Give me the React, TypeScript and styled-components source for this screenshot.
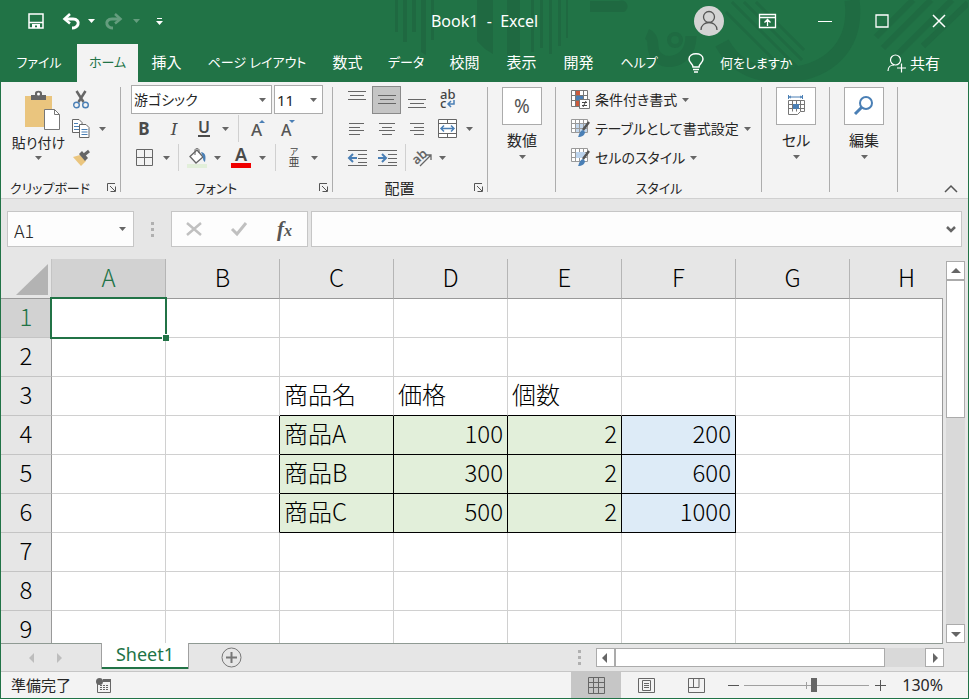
import React from "react";
import styled, { createGlobalStyle, css } from "styled-components";

const GREEN = "#217346";
const UI_FONT = `"Noto Sans", "Noto Sans CJK JP", sans-serif`;
const CELL_FONT = `"Noto Sans CJK JP", sans-serif`;

const Global = createGlobalStyle`
  *, *::before, *::after { box-sizing: border-box; }
  body { margin: 0; font-family: ${UI_FONT}; font-feature-settings: "palt"; font-size: 15px; line-height: 20px; color: #262626; }
  button, input, select { font: inherit; font-feature-settings: inherit; color: inherit; margin: 0; padding: 0; border: 0; border-radius: 0; background: none; outline: none; }
  svg { display: block; flex: none; overflow: visible; }
`;

const Window = styled.div`
  display: flex;
  flex-direction: column;
  height: 100vh;
  overflow: hidden;
  border: solid ${GREEN};
  border-width: 0 1px 1px;
  background: #e6e6e6;
`;

/* ---------- title and tabs ---------- */
const Header = styled.header`
  position: relative;
  background: ${GREEN};
  color: #fff;
  flex: none;
`;
const Pattern = styled.svg`
  position: absolute;
  right: 0;
  top: 0;
  overflow: hidden;
`;
const TitleBar = styled.div`
  position: relative;
  display: grid;
  grid-template-columns: 1fr auto 1fr;
  align-items: center;
  height: 44px;
  padding-bottom: 3px;
`;
const QuickAccess = styled.div`
  display: flex;
  align-items: center;
  padding-left: 17px;
`;
const WindowButtons = styled.div`
  display: flex;
  justify-content: flex-end;
  align-items: center;
  padding-right: 1px;
`;
const Title = styled.h1`
  margin: 0;
  font-size: 16px;
  font-weight: 400;
  white-space: pre;
`;
const IconButton = styled.button<{ $w: number; $on?: boolean; $dim?: boolean }>`
  display: flex;
  align-items: center;
  justify-content: center;
  flex: none;
  width: ${(p) => p.$w}px;
  height: 28px;
  opacity: ${(p) => (p.$dim ? 0.3 : 1)};
  ${(p) =>
    p.$on &&
    css`
      background: #c5c5c5;
      border: 1px solid #8a8a8a;
    `}
`;
const Tabs = styled.nav`
  position: relative;
  display: flex;
  height: 38px;
`;
const Tab = styled.button<{ $w: number; $active?: boolean; $kana?: boolean }>`
  width: ${(p) => p.$w}px;
  flex: none;
  padding-bottom: 2px;
  white-space: nowrap;
  font-size: ${(p) => (p.$kana ? 13 : 15)}px;
  color: ${(p) => (p.$active ? GREEN : "#fff")};
  background: ${(p) => (p.$active ? "#f3f3f3" : "transparent")};
`;
const TellMe = styled.button`
  display: flex;
  align-items: center;
  gap: 16px;
  padding-left: 17px;
  font-size: 13px;
`;
const Share = styled.button`
  display: flex;
  align-items: center;
  gap: 4px;
  margin-left: auto;
  padding-right: 28px;
`;

/* ---------- ribbon ---------- */
const Ribbon = styled.div`
  display: flex;
  position: relative;
  flex: none;
  height: 117px;
  background: #f3f3f3;
  border-bottom: 1px solid #d0d0d0;
`;
const Group = styled.section<{ $w: number }>`
  position: relative;
  display: flex;
  flex-direction: column;
  flex: none;
  width: ${(p) => p.$w}px;
  padding-top: 3px;
  &::after {
    content: "";
    position: absolute;
    right: 0;
    top: 5px;
    bottom: 6px;
    width: 1px;
    background: #adadad;
  }
`;
const GroupFooter = styled.div<{ $launcher?: boolean; $kana?: boolean }>`
  display: flex;
  align-items: center;
  justify-content: center;
  position: relative;
  margin-top: auto;
  height: 21px;
  padding-right: ${(p) => (p.$launcher ? 22 : 0)}px;
  font-size: ${(p) => (p.$kana ? 13 : 15)}px;
  white-space: nowrap;
`;
const Launcher = styled.button`
  position: absolute;
  right: 5px;
  top: 6px;
`;
const Rows = styled.div<{ $pad: number }>`
  display: grid;
  grid-auto-rows: 29px;
  padding-left: ${(p) => p.$pad}px;
`;
const Row = styled.div<{ $gap?: number }>`
  display: flex;
  align-items: center;
  gap: ${(p) => p.$gap || 0}px;
`;
const Divider = styled.span<{ $w: number }>`
  display: flex;
  justify-content: center;
  width: ${(p) => p.$w}px;
  &::before {
    content: "";
    width: 1px;
    height: 27px;
    background: #d0d0d0;
  }
`;
const Combo = styled.label<{ $w: number }>`
  display: flex;
  position: relative;
  align-items: center;
  width: ${(p) => p.$w}px;
  height: 29px;
  border: 1px solid #ababab;
  background: #fff;
  select {
    appearance: none;
    width: 100%;
    padding-left: 2px;
    font-size: ${(p) => (p.$w > 100 ? 14 : 15)}px;
  }
  svg {
    position: absolute;
    right: 5px;
    pointer-events: none;
  }
`;
const Letter = styled.span<{ $kind: "b" | "i" | "u" }>`
  font-size: 17px;
  line-height: 20px;
  font-weight: 700;
  color: #4a4a4a;
  ${(p) => p.$kind === "i" && `font-style: italic; font-family: "DejaVu Serif", "Liberation Serif", serif; font-weight: 400; font-size: 17px;`}
  ${(p) => p.$kind === "u" && `font-weight: 600; border-bottom: 2px solid #4a4a4a; line-height: 15px; font-size: 16px;`}
`;
const ClipboardBody = styled.div`
  display: flex;
  padding-left: 7px;
`;
const PasteButton = styled.button`
  display: flex;
  flex-direction: column;
  align-items: center;
  width: 61px;
  padding-top: 6px;
  gap: 3px;
  font-size: 14px;
  white-space: nowrap;
  svg:first-child {
    margin-left: 7px;
  }
`;
const BigButton = styled.button`
  display: flex;
  flex-direction: column;
  align-items: center;
  align-self: center;
  margin-top: 2px;
  gap: 5px;
`;
const BigBox = styled.span`
  display: flex;
  align-items: center;
  justify-content: center;
  width: 40px;
  height: 38px;
  font-size: 19px;
  color: #555;
  border: 1px solid #ababab;
  background: #fff;
`;
const BigLabel = styled.span`
  line-height: 20px;
`;
const StyleButton = styled.button`
  display: flex;
  align-items: center;
  gap: 5px;
  font-size: 14px;
  white-space: nowrap;
`;
const Collapse = styled.button`
  margin: auto 10px 5px auto;
`;

/* ---------- formula bar ---------- */
const FormulaBar = styled.div`
  display: flex;
  flex: none;
  padding: 12px 6px;
  height: 60px;
`;
const Field = styled.div<{ $w?: number }>`
  display: flex;
  align-items: center;
  ${(p) => (p.$w ? `flex: none; width: ${p.$w}px;` : "flex: 1; min-width: 0;")}
  background: #fdfdfd;
  border: 1px solid #c6c6c6;
  input {
    flex: 1;
    min-width: 0;
    height: 100%;
    padding: 2px 0 0 6px;
    font-size: 18px;
    font-weight: 300;
    font-family: ${CELL_FONT};
    font-feature-settings: normal;
  }
`;
const Grip = styled.div<{ $w: number }>`
  display: flex;
  flex-direction: column;
  align-items: center;
  justify-content: center;
  flex: none;
  gap: 3px;
  width: ${(p) => p.$w}px;
  i {
    width: 3px;
    height: 3px;
    background: #b0b0b0;
  }
`;
const Fx = styled.span`
  font: italic 700 21px "Liberation Serif", serif;
  color: #555;
  small {
    font-size: 16px;
  }
`;

/* ---------- sheet ---------- */
const Workspace = styled.main`
  display: flex;
  flex: 1;
  min-height: 0;
`;
const GridPane = styled.div`
  position: relative;
  flex: 1;
  min-width: 0;
  overflow: hidden;
  &::after {
    content: "";
    position: absolute;
    right: 0;
    top: 39px;
    bottom: 0;
    width: 1px;
    background: #999;
  }
`;
const Sheet = styled.table`
  table-layout: fixed;
  width: 963px;
  border-collapse: separate;
  border-spacing: 0;
  font-family: ${CELL_FONT};
  font-feature-settings: normal;
  font-size: 24px;
  font-weight: 300;
  line-height: 34px;
  color: #000;
  th,
  td {
    vertical-align: top;
  }
`;
const Corner = styled.td`
  width: 51px;
  height: 40px;
  padding: 5px 0 0 15px;
  border-right: 1px solid #c4c4c4;
  border-bottom: 1px solid #999;
`;
const ColHead = styled.th<{ $on: boolean }>`
  height: 40px;
  padding: 0;
  font-weight: 300;
  line-height: 36px;
  border-bottom: 1px solid #999;
  border-right: 1px solid #b5b5b5;
  color: ${(p) => (p.$on ? GREEN : "#000")};
  background: ${(p) => (p.$on ? "#d2d2d2" : "#e6e6e6")};
`;
const RowHead = styled.th<{ $on: boolean }>`
  height: 39px;
  padding: 0;
  font-weight: 300;
  border-right: 1px solid #999;
  border-bottom: 1px solid #c4c4c4;
  color: ${(p) => (p.$on ? GREEN : "#000")};
  background: ${(p) => (p.$on ? "#d2d2d2" : "#e6e6e6")};
`;
const Cell = styled.td<{ $fill: string; $right: boolean; $bottom: boolean; $num: boolean }>`
  position: relative;
  height: 39px;
  padding: 0 4px;
  white-space: nowrap;
  text-align: ${(p) => (p.$num ? "right" : "left")};
  background: ${(p) => p.$fill};
  border-right: 1px solid ${(p) => (p.$right ? "#000" : "#d0d0d0")};
  border-bottom: 1px solid ${(p) => (p.$bottom ? "#000" : "#d0d0d0")};
`;
const Selection = styled.div`
  position: absolute;
  inset: -2px;
  border: 2px solid ${GREEN};
  z-index: 1;
  &::after {
    content: "";
    position: absolute;
    right: -4px;
    bottom: -4px;
    width: 6px;
    height: 6px;
    background: ${GREEN};
    box-shadow: -1px -1px 0 #fff;
  }
`;
const ScrollBar = styled.div<{ $vertical?: boolean }>`
  display: flex;
  flex: none;
  background: #d9d9d9;
  ${(p) =>
    p.$vertical
      ? "flex-direction: column; width: 19px; margin: 2px 3px 0;"
      : "width: 36%; height: 19px; margin-right: 24px;"}
`;
const ScrollButton = styled.button`
  display: flex;
  align-items: center;
  justify-content: center;
  flex: none;
  width: 19px;
  height: 19px;
  border: 1px solid #ababab;
  background: #fff;
`;
const ScrollTrack = styled.div<{ $vertical?: boolean }>`
  flex: 1;
  &::before {
    content: "";
    display: block;
    border: 1px solid #ababab;
    background: #fff;
    ${(p) => (p.$vertical ? "height: 40%; width: 100%;" : "width: 87%; height: 100%;")}
  }
`;
const SheetBar = styled.div`
  display: flex;
  align-items: center;
  flex: none;
  height: 27px;
`;
const Rule = styled.div`
  flex: none;
  height: 1px;
  margin-right: 25px;
  background: #8f9a93;
`;
const SheetNav = styled.div`
  display: flex;
  gap: 17px;
  width: 100px;
  padding-left: 26px;
`;
const SheetTab = styled.button`
  align-self: flex-start;
  width: 88px;
  height: 26px;
  margin-top: -1px;
  padding-bottom: 4px;
  background: #fff;
  color: ${GREEN};
  font-size: 18px;
  line-height: 20px;
  border: solid #a0a0a0;
  border-width: 0 1px;
  box-shadow: inset 0 -2px 0 ${GREEN};
`;
const AddSheet = styled.button`
  margin-left: 32px;
  margin-right: auto;
`;
const StatusBar = styled.footer`
  display: flex;
  align-items: center;
  flex: none;
  height: 27px;
  padding: 0 25px 0 10px;
  border-top: 1px solid #c6c6c6;
  background: #f3f3f3;
`;
const StatusText = styled.span`
  margin-right: 25px;
`;
const ViewButton = styled.button<{ $on?: boolean }>`
  display: flex;
  align-items: center;
  justify-content: center;
  width: 50px;
  height: 26px;
  background: ${(p) => (p.$on ? "#c6c6c6" : "transparent")};
`;
const Views = styled.div`
  display: flex;
  margin-left: auto;
  margin-right: 6px;
`;
const Zoom = styled.input`
  appearance: none;
  width: 125px;
  height: 14px;
  margin: 0 6px 0 5px;
  background:
    linear-gradient(#a0a0a0, #a0a0a0) center / 100% 1px no-repeat,
    linear-gradient(#a0a0a0, #a0a0a0) center / 1px 7px no-repeat;
  &::-webkit-slider-thumb {
    appearance: none;
    width: 6px;
    height: 14px;
    background: #666;
  }
`;
const ZoomText = styled.output`
  width: 58px;
  font-size: 16px;
  text-align: right;
`;

/* ---------- icons ---------- */
const Caret = ({ color = "#666" }: { color?: string }) => (
  <svg width="7" height="4" viewBox="0 0 7 4"><path d="M0 0h7L3.5 4z" fill={color} /></svg>
);
const Arrow = ({ dir, color = "#666" }: { dir: "up" | "down" | "left" | "right"; color?: string }) => {
  const d = { up: "M0 7 5 2l5 5z", down: "M0 3h10L5 8z", left: "M7 0v10L2 5z", right: "M3 0v10l5-5z" }[dir];
  return <svg width="10" height="10"><path d={d} fill={color} /></svg>;
};
const LauncherIcon = () => (
  <svg width="9" height="9" fill="none" stroke="#555"><path d="M.5 8V.5H8M3 3l5 5M8.500 3.500v5h-5" /></svg>
);
const Lines = ({ rows, w = 20, h = 20 }: { rows: number[][]; w?: number; h?: number }) => (
  <svg width={w} height={h} stroke="#666">
    {rows.map(([x1, x2, y]) => <path key={y} d={`M${x1} ${y + 0.5}H${x2}`} />)}
  </svg>
);

const HeaderPattern = () => (
  <Pattern width="600" height="82" viewBox="369 0 600 82" fill="none" stroke="#1f6b42">
    <g fill="#1f6941" stroke="none">
      <path d="M396 0h3v32h-3zM404 0h4v42h-4zM413 0h4v32h-4zM422 0h5v55l-5-3zM432 0h3v40h-3z" />
      <path d="M478 0h16v54l-8-5-8-8zM508 0h13v55h-13zM532 0h3v52h-3zM541 0h3v48h-3zM550 0h3v54h-3zM559 0h3v46h-3zM567 0h2v38h-2z" />
      <path d="M591 1h29a6 6 0 0 1 5 11h-34z" />
    </g>
    <path d="M648 34c5 2 6 6 6 12 0 22 38 22 38-10" strokeWidth="11" />
    <circle cx="676" cy="40" r="6" strokeWidth="4" />
    <path d="M733 2l65 65M745 2l58 58M757 2l48 48M727 12l54 54" strokeWidth="3" />
    <path d="M853 0c6 46-24 75-72 75-30 0-47-12-58-32" strokeWidth="15" />
    <path d="M877 37 914 0M884 48 932 0M894 59 953 0M924 46 969 3" strokeWidth="6" />
  </Pattern>
);
const SaveIcon = () => (
  <svg width="16" height="16" fill="none" stroke="#fff" strokeWidth="1.500"><path d="M1 1h14v14H1zM1 9.500h14" /><path d="M4 11h8v4H9v-2.500H7V15H4z" fill="#fff" stroke="none" /></svg>
);
const UndoIcon = () => (
  <svg width="18" height="16" fill="none" stroke="#fff" strokeWidth="3"><path d="M8 1 2.500 6 8 10.500" strokeWidth="2.500" /><path d="M3 6h8c4 0 6 3 5 5.500S13 15 10 15" /></svg>
);
const RedoIcon = () => (
  <svg width="18" height="16" fill="none" stroke="#fff" strokeWidth="3"><path d="M10 1l5.500 5L10 10.500" strokeWidth="2.500" /><path d="M15 6H7C3 6 1 9 2 11.500S5 15 8 15" /></svg>
);
const PasteIcon = () => (
  <svg width="35" height="39"><path d="M0 5h27v31H0z" fill="#eac57e" /><path d="M6 9V4h4V2c0-3 7-3 7 0v2h4v5z" fill="#666" /><circle cx="13.500" cy="3" r="1.500" fill="#fff" /><path d="M19.500 18.500h10l5 5v15h-15z" fill="#fff" stroke="#777" /><path d="M29.500 18.500v5h5" fill="none" stroke="#777" /></svg>
);
const CutIcon = () => (
  <svg width="16" height="18" fill="none"><path d="M3.500 0l7 11M12.500 0l-7 11" stroke="#666" strokeWidth="2.500" /><circle cx="3.500" cy="14" r="2.800" stroke="#4a7fb5" strokeWidth="1.400" /><circle cx="12.500" cy="14" r="2.800" stroke="#4a7fb5" strokeWidth="1.400" /></svg>
);
const CopyIcon = () => (
  <svg width="18" height="19" fill="#fff" stroke="#666"><path d="M.5.5H7l3 3v10H.5z" /><path d="M7.500 5.500H14l3 3v10H7.500z" /><path d="M2 4.500h4M2 7.500h5M2 10.500h5M9.500 10.500h6M9.500 13h6M9.500 15.500h6" stroke="#4a7fb5" /></svg>
);
const PainterIcon = () => (
  <svg width="18" height="16"><path d="M0 7l7-2 6 6-5 5z" fill="#eac57e" /><path d="M6 4l3-3 6 7-3 3z" fill="#666" /><path d="M11 5l5-4" stroke="#666" strokeWidth="3" /></svg>
);
const BorderIcon = () => (
  <svg width="18" height="18" fill="none" stroke="#666"><path d="M.5.5h16v16H.5zM8.500 0v17M0 8.500h17" /></svg>
);
const BucketIcon = () => (
  <svg width="20" height="20"><path d="M3 8.500 10 2l6 7-7 6z" fill="#fff" stroke="#666" strokeWidth="1.300" /><path d="M8 7V2c0-2 4-2 4 0v3" fill="none" stroke="#666" /><path d="M14 4c5 1 5 5 4 10-2-1-2-3-2-5z" fill="#4a7fb5" /><path d="M0 16h20v4H0z" fill="#e2efda" /></svg>
);
const FontColorIcon = () => (
  <svg width="20" height="20"><text x="10" y="13" textAnchor="middle" fontSize="18" fontWeight="600" fill="#4a4a4a">A</text><path d="M0 15h20v5H0z" fill="#f00000" /></svg>
);
const FontSizeIcon = ({ up }: { up?: boolean }) => (
  <svg width="16" height="20"><text x="1" y="17" fontSize={up ? 17 : 16} fontWeight="500" fill="#555">A</text><path d={up ? "M9 4h6l-3-3z" : "M9 1h6l-3 3z"} fill="#4a7fb5" /></svg>
);
const PhoneticIcon = () => (
  <svg width="12" height="20"><text x="6" y="7" textAnchor="middle" fontSize="9" fill="#444">ア</text><text x="6" y="18" textAnchor="middle" fontSize="11" fill="#444">亜</text></svg>
);
const WrapIcon = () => (
  <svg width="18" height="20"><text x="2" y="9" fontSize="13" fontWeight="500" fill="#444">ab</text><text x="2" y="18" fontSize="13" fontWeight="500" fill="#444">c</text><path d="M16 10v4h-6m3-3-3 3 3 3" fill="none" stroke="#4a7fb5" strokeWidth="1.500" /></svg>
);
const MergeIcon = () => (
  <svg width="19" height="19" fill="#fff" stroke="#666"><path d="M.5.5h18v18H.5zM0 4.500h19M0 14.500h19M9.500 0v4M9.500 15v4" /><path d="M3 9.500h13M6 6.500l-3 3 3 3M13 6.500l3 3-3 3" fill="none" stroke="#4a7fb5" strokeWidth="1.500" /></svg>
);
const IndentIcon = ({ out }: { out?: boolean }) => (
  <svg width="19" height="18" stroke="#666" fill="none"><path d="M0 1.500h19M10 5.500h9M10 9.500h9M10 13.500h9M0 16.500h19" /><path d={out ? "M9 9H1m4-4L1 9l4 4" : "M0 9h8M4 5l4 4-4 4"} stroke="#4a7fb5" strokeWidth="2" /></svg>
);
const OrientIcon = () => (
  <svg width="20" height="20"><text x="0" y="14" fontSize="13" fontWeight="600" fill="#666" transform="rotate(-42 6 11)">ab</text><path d="M7 18 18 7m-5 0h5v5" fill="none" stroke="#666" strokeWidth="1.300" /></svg>
);
const CondIcon = () => (
  <svg width="19" height="20" fill="#fff" stroke="#777"><path d="M.5.5h16v16H.5zM.5 5.500h16M.5 10.500h16M4.500.5v16M12.500.5v16" /><path d="M5 1h4v4H5zM5 11h3v5H5z" fill="#cc5a3c" stroke="none" /><path d="M5 6h7v4H5z" fill="#4a7fb5" stroke="none" /><path d="M8.500 9.500h10v9h-10z" /><path d="M11 12.500h5M11 15.500h5M15 11l-3 6" stroke="#444" /></svg>
);
const BrushTable = ({ cell }: { cell?: boolean }) => (
  <svg width="19" height="19" fill="#fff" stroke="#999">
    <path d="M.5.5h16v13H.5z" />
    {!cell && <path d="M5 5h11v8H5z" fill="#c3d7ec" stroke="none" />}
    <path d="M.5 4.500h16M.5 9.500h16M4.500.5v13M8.500.5v13M12.500.5v13" fill="none" />
    {cell && <path d="M5 4h9v6H5z" fill="#bcd3ec" stroke="none" />}
    <path d="M18 3l-6 8" stroke="#555" strokeWidth="2.500" />
    <path d="M7 18c1-1 1-6 5-7l2 2c0 3-3 5-7 5z" fill="#4a7fb5" stroke="none" />
  </svg>
);
const CellsIcon = () => (
  <svg width="19" height="22" fill="none" stroke="#777"><path d="M1.500 5.500h16v11h-4l-3 3h-9zM1.500 9.500h16M1.500 13.500h16M5.500 5.500v11M9.500 5.500v11M13.500 5.500v11" /><path d="M6 9h6v5H6z" fill="#4a7fb5" stroke="none" /><path d="M1.500 0v4M15.500 0v4M3 2h11" stroke="#4a7fb5" /><path d="M4 1 2 2l2 1M13 1l2 1-2 1" stroke="#4a7fb5" /></svg>
);
const SearchIcon = () => (
  <svg width="20" height="20" fill="none" stroke="#4a7fb5" strokeWidth="2"><circle cx="12" cy="7" r="6" /><path d="M8 11l-7 7" strokeWidth="3" /></svg>
);

/* ---------- data ---------- */
const TABS: [string, number, boolean][] = [
  ["ファイル", 76, true], ["ホーム", 61, true], ["挿入", 57, false], ["ページ レイアウト", 124, true], ["数式", 57, false],
  ["データ", 60, true], ["校閲", 57, false], ["表示", 57, false], ["開発", 57, false], ["ヘルプ", 64, true],
];
const COLS = ["A", "B", "C", "D", "E", "F", "G", "H"];
const DATA: Record<string, string | number> = {
  C3: "商品名", D3: "価格", E3: "個数",
  C4: "商品A", D4: 100, E4: 2, F4: 200,
  C5: "商品B", D5: 300, E5: 2, F5: 600,
  C6: "商品C", D6: 500, E6: 2, F6: 1000,
};

const Footer = ({ label, launcher, kana }: { label: string; launcher?: boolean; kana?: boolean }) => (
  <GroupFooter $launcher={launcher} $kana={kana}>
    {label}
    {launcher && <Launcher aria-label={`${label}の設定`}><LauncherIcon /></Launcher>}
  </GroupFooter>
);

const CollapsedGroup = ({ w, label, children }: { w: number; label: string; children: React.ReactNode }) => (
  <Group $w={w}>
    <BigButton>
      <BigBox>{children}</BigBox>
      <BigLabel>{label}</BigLabel>
      <Caret />
    </BigButton>
  </Group>
);

const DropButton = ({ w, label }: { w: number; label: string }) => (
  <IconButton $w={w} aria-label={label}><Caret /></IconButton>
);

export default function App() {
  return (
    <Window>
      <Global />
      <Header>
        <HeaderPattern />
        <TitleBar>
          <QuickAccess>
            <IconButton $w={36} aria-label="保存"><SaveIcon /></IconButton>
            <IconButton $w={34} aria-label="元に戻す"><UndoIcon /></IconButton>
            <IconButton $w={6} aria-label="元に戻す履歴"><Caret color="#fff" /></IconButton>
            <IconButton $w={40} $dim aria-label="やり直し"><RedoIcon /></IconButton>
            <IconButton $w={4} $dim aria-label="やり直し履歴"><Caret color="#fff" /></IconButton>
            <IconButton $w={42} aria-label="クイック アクセスのカスタマイズ">
              <svg width="7" height="8" fill="#fff"><path d="M1 1h5v1H1zM0 4h7L3.500 8z" /></svg>
            </IconButton>
          </QuickAccess>
          <Title>Book1  -  Excel</Title>
          <WindowButtons>
            <IconButton $w={60} aria-label="アカウント">
              <svg width="30" height="30" fill="none" stroke="#555" strokeWidth="1.300"><circle cx="15" cy="15" r="15" fill="#d4d4d4" stroke="none" /><circle cx="15" cy="11" r="5.500" /><path d="M7 24c0-10 16-10 16 0" /></svg>
            </IconButton>
            <IconButton $w={57} aria-label="リボンの表示オプション">
              <svg width="17" height="14" fill="none" stroke="#fff"><path d="M.5.5h16v13H.5zM.5 3.500h16M8.500 12V6M5.500 8.500l3-3 3 3" strokeWidth="1.300" /></svg>
            </IconButton>
            <IconButton $w={57} aria-label="最小化"><svg width="14" height="14" stroke="#fff"><path d="M0 7.500h14" /></svg></IconButton>
            <IconButton $w={57} aria-label="最大化"><svg width="14" height="14" stroke="#fff" fill="none"><path d="M1 1h12v12H1z" strokeWidth="1.300" /></svg></IconButton>
            <IconButton $w={57} aria-label="閉じる"><svg width="14" height="14" stroke="#fff" strokeWidth="1.500"><path d="M1 1l12 12M13 1 1 13" /></svg></IconButton>
          </WindowButtons>
        </TitleBar>
        <Tabs>
          {TABS.map(([t, w, kana]) => <Tab key={t} $w={w} $kana={kana} $active={t === "ホーム"}>{t}</Tab>)}
          <TellMe>
            <svg width="16" height="20" fill="none" stroke="#fff" strokeWidth="1.500"><path d="M5 14c0-3-4-4-4-8 0-7 14-7 14 0 0 4-4 5-4 8zM5 16.500h6M6 19h4" /></svg>
            何をしますか
          </TellMe>
          <Share>
            <svg width="19" height="19" fill="none" stroke="#fff" strokeWidth="1.200"><circle cx="8.500" cy="6" r="5" /><path d="M1 17c0-4 3-6 6-6M14.500 9.500v9M10 14h9" /></svg>
            共有
          </Share>
        </Tabs>
      </Header>

      <Ribbon>
        <Group $w={120}>
          <ClipboardBody>
            <PasteButton><PasteIcon /><BigLabel>貼り付け</BigLabel><Caret /></PasteButton>
            <Rows $pad={0}>
              <Row><IconButton $w={24} aria-label="切り取り"><CutIcon /></IconButton></Row>
              <Row><IconButton $w={24} aria-label="コピー"><CopyIcon /></IconButton><DropButton w={18} label="コピーのオプション" /></Row>
              <Row><IconButton $w={26} aria-label="書式のコピー"><PainterIcon /></IconButton></Row>
            </Rows>
          </ClipboardBody>
          <Footer label="クリップボード" launcher kana />
        </Group>

        <Group $w={212}>
          <Rows $pad={10}>
            <Row $gap={2}>
              <Combo $w={141}><select aria-label="フォント"><option>游ゴシック</option></select><Caret /></Combo>
              <Combo $w={49}><select aria-label="フォント サイズ"><option>11</option></select><Caret /></Combo>
            </Row>
            <Row>
              <IconButton $w={26} aria-label="太字"><Letter $kind="b">B</Letter></IconButton>
              <IconButton $w={34} aria-label="斜体"><Letter $kind="i">I</Letter></IconButton>
              <IconButton $w={26} aria-label="下線"><Letter $kind="u">U</Letter></IconButton>
              <DropButton w={16} label="下線の種類" />
              <Divider $w={10} />
              <IconButton $w={30} aria-label="フォント サイズの拡大"><FontSizeIcon up /></IconButton>
              <IconButton $w={30} aria-label="フォント サイズの縮小"><FontSizeIcon /></IconButton>
            </Row>
            <Row>
              <IconButton $w={28} aria-label="罫線"><BorderIcon /></IconButton>
              <DropButton w={14} label="罫線の種類" />
              <Divider $w={10} />
              <IconButton $w={28} aria-label="塗りつぶしの色"><BucketIcon /></IconButton>
              <DropButton w={12} label="塗りつぶしの色の選択" />
              <IconButton $w={36} aria-label="フォントの色"><FontColorIcon /></IconButton>
              <DropButton w={6} label="フォントの色の選択" />
              <Divider $w={20} />
              <IconButton $w={18} aria-label="ふりがなの表示"><PhoneticIcon /></IconButton>
              <DropButton w={22} label="ふりがなのオプション" />
            </Row>
          </Rows>
          <Footer label="フォント" launcher kana />
        </Group>

        <Group $w={155}>
          <Rows $pad={9}>
            <Row>
              <IconButton $w={30} aria-label="上揃え"><Lines rows={[[1, 19, 1], [3, 17, 5], [1, 19, 9]]} /></IconButton>
              <IconButton $w={29} $on aria-label="上下中央揃え"><Lines rows={[[1, 19, 5], [3, 17, 9], [1, 19, 13]]} /></IconButton>
              <IconButton $w={31} aria-label="下揃え"><Lines rows={[[1, 19, 9], [3, 17, 13], [1, 19, 17]]} /></IconButton>
              <IconButton $w={30} aria-label="折り返して全体を表示する"><WrapIcon /></IconButton>
            </Row>
            <Row>
              <IconButton $w={30} aria-label="左揃え"><Lines w={16} h={14} rows={[[0, 15, 1], [0, 11, 5], [0, 15, 8], [0, 11, 12]]} /></IconButton>
              <IconButton $w={30} aria-label="中央揃え"><Lines w={16} h={14} rows={[[0, 16, 1], [3, 13, 5], [0, 16, 8], [3, 13, 12]]} /></IconButton>
              <IconButton $w={30} aria-label="右揃え"><Lines w={16} h={14} rows={[[1, 15, 1], [5, 15, 5], [1, 15, 8], [5, 15, 12]]} /></IconButton>
              <IconButton $w={30} aria-label="セルを結合して中央揃え"><MergeIcon /></IconButton>
              <DropButton w={14} label="結合のオプション" />
            </Row>
            <Row>
              <IconButton $w={30} aria-label="インデントを減らす"><IndentIcon out /></IconButton>
              <IconButton $w={30} aria-label="インデントを増やす"><IndentIcon /></IconButton>
              <Divider $w={6} />
              <IconButton $w={30} aria-label="方向"><OrientIcon /></IconButton>
              <DropButton w={8} label="方向の選択" />
            </Row>
          </Rows>
          <Footer label="配置" launcher />
        </Group>

        <CollapsedGroup w={68} label="数値">%</CollapsedGroup>

        <Group $w={206}>
          <Rows $pad={15}>
            <Row><StyleButton><CondIcon />条件付き書式<Caret /></StyleButton></Row>
            <Row><StyleButton><BrushTable />テーブルとして書式設定<Caret /></StyleButton></Row>
            <Row><StyleButton><BrushTable cell />セルのスタイル<Caret /></StyleButton></Row>
          </Rows>
          <Footer label="スタイル" kana />
        </Group>

        <CollapsedGroup w={68} label="セル"><CellsIcon /></CollapsedGroup>
        <CollapsedGroup w={68} label="編集"><SearchIcon /></CollapsedGroup>
        <Collapse aria-label="リボンを折りたたむ">
          <svg width="14" height="8" fill="none" stroke="#555" strokeWidth="1.500"><path d="M1 7l6-6 6 6" /></svg>
        </Collapse>
      </Ribbon>

      <FormulaBar>
        <Field $w={127}>
          <input aria-label="名前ボックス" defaultValue="A1" />
          <DropButton w={21} label="名前の一覧" />
        </Field>
        <Grip $w={37}><i /><i /><i /></Grip>
        <Field $w={137}>
          <IconButton $w={44} aria-label="キャンセル"><svg width="16" height="14" stroke="#c0c0c0" strokeWidth="2.500"><path d="M1 1l14 12M15 1 1 13" /></svg></IconButton>
          <IconButton $w={46} aria-label="入力"><svg width="18" height="14" fill="none" stroke="#c0c0c0" strokeWidth="3"><path d="M2 7l5 5L16 1" /></svg></IconButton>
          <IconButton $w={45} aria-label="関数の挿入"><Fx>f<small>x</small></Fx></IconButton>
        </Field>
        <Grip $w={3} />
        <Field>
          <input aria-label="数式バー" />
          <IconButton $w={20} aria-label="数式バーの展開"><svg width="10" height="7" fill="none" stroke="#666" strokeWidth="2.500"><path d="M1 1l4 4 4-4" /></svg></IconButton>
        </Field>
      </FormulaBar>

      <Workspace>
        <GridPane>
          <Sheet>
            <thead>
              <tr>
                <Corner><svg width="32" height="31"><path d="M32 0v31H0z" fill="#b3b3b3" /></svg></Corner>
                {COLS.map((c) => <ColHead key={c} $on={c === "A"} scope="col">{c}</ColHead>)}
              </tr>
            </thead>
            <tbody>
              {Array.from({ length: 9 }, (_, i) => i + 1).map((r) => (
                <tr key={r}>
                  <RowHead $on={r === 1} scope="row">{r}</RowHead>
                  {COLS.map((c, i) => {
                    const inRows = r >= 4 && r <= 6;
                    const v = DATA[c + r];
                    const fill = inRows && i >= 2 && i <= 4 ? "#e2efda" : inRows && i === 5 ? "#ddebf7" : "#fff";
                    return (
                      <Cell
                        key={c}
                        $fill={fill}
                        $num={typeof v === "number"}
                        $right={inRows && i >= 1 && i <= 5}
                        $bottom={r >= 3 && r <= 6 && i >= 2 && i <= 5}
                      >
                        {v}
                        {c === "A" && r === 1 && <Selection />}
                      </Cell>
                    );
                  })}
                </tr>
              ))}
            </tbody>
          </Sheet>
        </GridPane>
        <ScrollBar $vertical>
          <ScrollButton aria-label="上へ"><Arrow dir="up" /></ScrollButton>
          <ScrollTrack $vertical />
          <ScrollButton aria-label="下へ"><Arrow dir="down" /></ScrollButton>
        </ScrollBar>
      </Workspace>
      <Rule />
      <SheetBar>
        <SheetNav>
          <button aria-label="前のシート"><Arrow dir="left" color="#bdbdbd" /></button>
          <button aria-label="次のシート"><Arrow dir="right" color="#bdbdbd" /></button>
        </SheetNav>
        <SheetTab>Sheet1</SheetTab>
        <AddSheet aria-label="新しいシート">
          <svg width="21" height="21" fill="none" stroke="#777"><circle cx="10.500" cy="10.500" r="9.500" /><path d="M5 10.500h11M10.500 5v11" strokeWidth="2" /></svg>
        </AddSheet>
        <Grip $w={33}><i /><i /><i /></Grip>
        <ScrollBar>
          <ScrollButton aria-label="左へ"><Arrow dir="left" /></ScrollButton>
          <ScrollTrack />
          <ScrollButton aria-label="右へ"><Arrow dir="right" /></ScrollButton>
        </ScrollBar>
      </SheetBar>
      <StatusBar>
        <StatusText>準備完了</StatusText>
        <svg width="16" height="15" fill="none" stroke="#666"><path d="M4 7.500h9M4 9.500h9M4 11.500h9" strokeDasharray="2 1" /><path d="M1.500 5v9.500h13V4" /><path d="M7 1h8v3H7z" fill="#666" stroke="none" /><circle cx="3.500" cy="3.500" r="3.500" fill="#666" stroke="none" /></svg>
        <Views>
          <ViewButton $on aria-label="標準"><svg width="17" height="17" fill="none" stroke="#666"><path d="M.5.5h16v16H.5zM.5 5.500h16M.5 10.500h16M5.500.5v16M10.500.5v16" /></svg></ViewButton>
          <ViewButton aria-label="ページ レイアウト表示"><svg width="17" height="15" fill="none" stroke="#666"><path d="M.5.5h16v14H.5zM4.500 2.500h8v10h-8zM6 5.500h5M6 7.500h5M6 9.500h5" /></svg></ViewButton>
          <ViewButton aria-label="改ページ プレビュー"><svg width="17" height="15" fill="none" stroke="#666"><path d="M.5.5h16v14H.5zM.5 9.500h10.500V.5M5.500.5v9" /></svg></ViewButton>
        </Views>
        <IconButton $w={12} aria-label="縮小"><svg width="11" height="11" stroke="#555"><path d="M0 5.500h11" /></svg></IconButton>
        <Zoom type="range" aria-label="ズーム" min={0} max={100} defaultValue={56} />
        <IconButton $w={10} aria-label="拡大"><svg width="11" height="11" stroke="#555"><path d="M0 5.500h11M5.500 0v11" /></svg></IconButton>
        <ZoomText>130%</ZoomText>
      </StatusBar>
    </Window>
  );
}
